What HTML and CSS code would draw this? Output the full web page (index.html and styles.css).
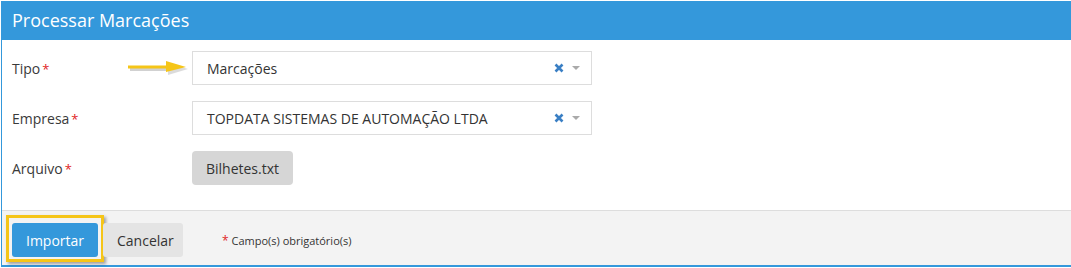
FILE: index.html
```html
<!DOCTYPE html>
<html lang="pt-BR">
<head>
  <meta charset="UTF-8" />
  <title>Processar Marcações</title>
  <link rel="stylesheet" href="styles.css">
</head>
<body>

  <div class="panel">
    <div class="panel-heading">Processar Marcações</div>

    <div class="panel-body">
      <div class="form-row">
        <label>Tipo<span class="req">*</span></label>
        <div class="field">
          <svg class="pointer" width="62" height="16" viewBox="0 0 62 16">
            <path d="M2 10 H42" stroke="#999" stroke-opacity="0.45" stroke-width="4" fill="none"/>
            <path d="M40 4 L60 10 L40 16 Z" fill="#999" fill-opacity="0.35"/>
            <path d="M0 8 H40" stroke="#f5c518" stroke-width="3" fill="none"/>
            <path d="M38 2 L58 8 L38 13 Z" fill="#f5c518"/>
          </svg>
          <div class="select">
            <span>Marcações</span>
            <svg class="clear" width="10" height="10" viewBox="0 0 10 10">
              <path d="M1.5 1.5 L8.5 8.5 M8.5 1.5 L1.5 8.5" stroke="#3a7fc4" stroke-width="2.6"/>
            </svg>
            <span class="caret"></span>
          </div>
        </div>
      </div>

      <div class="form-row">
        <label>Empresa<span class="req">*</span></label>
        <div class="field">
          <div class="select">
            <span>TOPDATA SISTEMAS DE AUTOMAÇÃO LTDA</span>
            <svg class="clear" width="10" height="10" viewBox="0 0 10 10">
              <path d="M1.5 1.5 L8.5 8.5 M8.5 1.5 L1.5 8.5" stroke="#3a7fc4" stroke-width="2.6"/>
            </svg>
            <span class="caret"></span>
          </div>
        </div>
      </div>

      <div class="form-row">
        <label>Arquivo<span class="req">*</span></label>
        <div class="field">
          <button class="file-btn">Bilhetes.txt</button>
        </div>
      </div>
    </div>

    <div class="panel-footer">
      <div class="highlight">
        <button class="btn btn-primary">Importar</button>
      </div>
      <button class="btn btn-default">Cancelar</button>
      <span class="note"><span class="req">*</span> Campo(s) obrigatório(s)</span>
    </div>
  </div>

</body>
</html>
```

FILE: styles.css
```css
:root {
  --blue: #3498db;
  --text: #333;
}

body {
  margin: 0;
  font-family: 'Open Sans', 'Noto Sans', sans-serif;
  color: var(--text);
  background: white;
}

.panel {
  margin: 1px 0 0 1px;
  border-left: 1px solid var(--blue);
  border-bottom: 2px solid var(--blue);
  height: 266px;
  box-sizing: border-box;
  display: flex;
  flex-direction: column;
}

.panel-heading {
  background: var(--blue);
  color: white;
  font-size: 18px;
  height: 39px;
  line-height: 38px;
  padding-left: 11px;
  margin-left: -1px;
}

.panel-body {
  flex: 1;
  padding-top: 11px;
}

.form-row {
  display: flex;
  align-items: center;
  height: 34px;
  margin-bottom: 16px;
}

.form-row label {
  width: 180px;
  padding-left: 10px;
  font-size: 14px;
  color: #3a3a3a;
}

.req {
  color: #e02424;
  margin-left: 2px;
  font-size: 13px;
}

.field {
  position: relative;
}

.pointer {
  position: absolute;
  left: -64px;
  top: 8px;
}

.select {
  width: 400px;
  height: 34px;
  box-sizing: border-box;
  border: 1px solid #ddd;
  display: flex;
  align-items: center;
  padding: 0 11px 0 14px;
  font-size: 14px;
  color: #333;
}

.select span:first-child {
  flex: 1;
}

.clear {
  margin-right: 8px;
}

.caret {
  width: 0;
  height: 0;
  border-left: 4px solid transparent;
  border-right: 4px solid transparent;
  border-top: 4px solid #aaa;
}

.file-btn {
  font-family: inherit;
  font-size: 14px;
  color: #333;
  background: #d6d6d6;
  border: none;
  border-radius: 4px;
  height: 34px;
  width: 101px;
}

.panel-footer {
  background: #f3f3f3;
  border-top: 1px solid #ddd;
  height: 55px;
  box-sizing: border-box;
  display: flex;
  align-items: center;
  padding-left: 4px;
}

.highlight {
  border: 3px solid #f5c518;
  padding: 5px 3px 2px 3px;
  box-shadow: 2px 2px 3px rgba(0, 0, 0, 0.35);
  margin-top: 1px;
}

.btn {
  font-family: inherit;
  font-size: 14px;
  border: none;
  border-radius: 3px;
  height: 34px;
  padding: 0 14px;
}

.btn-primary {
  background: var(--blue);
  color: white;
  width: 86px;
  display: block;
}

.btn-default {
  background: #e4e4e4;
  color: #333;
  width: 80px;
  margin-left: -1px;
  margin-top: 4px;
}

.note {
  font-size: 11px;
  margin-left: 39px;
  margin-top: 4px;
  color: #333;
}

.note .req {
  font-size: 12px;
  margin: 0;
}
```
